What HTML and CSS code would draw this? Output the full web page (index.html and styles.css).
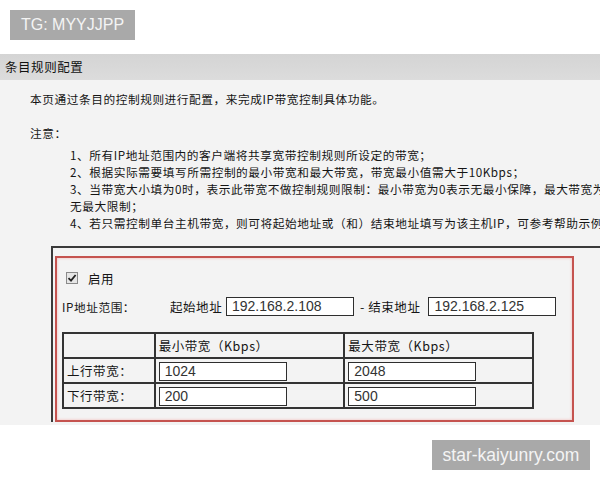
FILE: index.html
```html
<!DOCTYPE html>
<html lang="zh">
<head>
<meta charset="utf-8">
<link rel="stylesheet" href="styles.css">
</head>
<body>
<div class="page">
  <div class="top"><span class="tag">TG: MYYJJPP</span></div>
  <div class="titlebar">条目规则配置</div>
  <div class="content">
    <p class="intro">本页通过条目的控制规则进行配置，来完成IP带宽控制具体功能。</p>
    <p class="note">注意：</p>
    <ul class="items">
      <li>1、所有IP地址范围内的客户端将共享宽带控制规则所设定的带宽；</li>
      <li>2、根据实际需要填写所需控制的最小带宽和最大带宽，带宽最小值需大于10Kbps；</li>
      <li>3、当带宽大小填为0时，表示此带宽不做控制规则限制：最小带宽为0表示无最小保障，最大带宽为0表示</li>
      <li>无最大限制；</li>
      <li>4、若只需控制单台主机带宽，则可将起始地址或（和）结束地址填写为该主机IP，可参考帮助示例。</li>
    </ul>
    <div class="frame">
      <div class="redbox">
        <div class="row enable">
          <svg class="check" width="12" height="12" viewBox="0 0 12 12">
            <rect x="0.5" y="0.5" width="11" height="11" fill="#e6e6e6" stroke="#8a8a8a"/>
            <path d="M2.5 6.2 L5 8.6 L9.6 3" fill="none" stroke="#222" stroke-width="1.8"/>
          </svg>
          <span>启用</span>
        </div>
        <div class="row iprow">
          <span class="lbl">IP地址范围：</span>
          <span class="sub">起始地址</span>
          <span class="field w127">192.168.2.108</span>
          <span class="dash">- 结束地址</span>
          <span class="field w127">192.168.2.125</span>
        </div>
        <table class="bw">
          <tr><td class="c1"></td><td class="c2">最小带宽（Kbps）</td><td class="c3">最大带宽（Kbps）</td></tr>
          <tr><td>上行带宽：</td><td><span class="field cell">1024</span></td><td><span class="field cell">2048</span></td></tr>
          <tr><td>下行带宽：</td><td><span class="field cell">200</span></td><td><span class="field cell">500</span></td></tr>
        </table>
      </div>
    </div>
  </div>
  <div class="site">star-kaiyunry.com</div>
</div>
</body>
</html>
```

FILE: styles.css
```css
html, body {
  margin: 0;
  padding: 0;
  background: #ffffff;
  overflow: hidden;
}
body {
  font-family: "Noto Sans CJK SC", "Liberation Sans", sans-serif;
  font-size: 11.7px;
  letter-spacing: 0.55px;
  color: #151515;
}
.page {
  position: relative;
  width: 600px;
  height: 480px;
  overflow: hidden;
}
.top {
  height: 54px;
  padding: 10px 0 0 10px;
  box-sizing: border-box;
}
.tag {
  display: inline-block;
  width: 125px;
  height: 30px;
  line-height: 30px;
  background: #a9a9a9;
  color: #f4f4f4;
  font-family: "Liberation Sans", sans-serif;
  font-size: 16px;
  letter-spacing: 0;
  text-align: center;
}
.titlebar {
  height: 26px;
  line-height: 26px;
  padding-left: 5px;
  background: linear-gradient(#d4d4d4, #dcdcdc);
  font-size: 12.5px;
  color: #111;
}
.content {
  background: #f3f3f3;
  height: 345px;
  overflow: hidden;
  white-space: nowrap;
}
.intro {
  margin: 0;
  padding: 10px 0 0 30px;
  line-height: 17px;
}
.note {
  margin: 0;
  padding: 17px 0 0 30px;
  line-height: 17px;
}
.items {
  list-style: none;
  margin: 0;
  padding: 5px 0 0 70px;
}
.items li {
  line-height: 17px;
}
.frame {
  margin: 15px 0 0 51px;
  border-top: 2px solid #3a3a3a;
  border-left: 2px solid #3a3a3a;
  padding: 8px 0 0 2px;
}
.redbox {
  width: 510px;
  height: 152px;
  border: 2px solid #c5534f;
  box-shadow: inset 0 0 3px #f2b8b6;
  padding: 10px 0 0 5px;
  box-sizing: content-box;
}
.row {
  display: flex;
  align-items: center;
}
.enable {
  height: 20px;
  padding-left: 4px;
  gap: 10px;
}
.enable span {
  font-size: 12.5px;
}
.iprow {
  margin-top: 8px;
  height: 20px;
}
.lbl {
  width: 108px;
}
.sub {
  width: 56px;
  font-size: 12.5px;
}
.dash {
  margin: 0 8px 0 6px;
  font-size: 12.5px;
}
.field {
  display: inline-block;
  box-sizing: border-box;
  height: 19px;
  line-height: 17px;
  background: #ffffff;
  border: 1px solid #2e2e2e;
  padding-left: 5px;
  font-family: "Liberation Sans", sans-serif;
  font-size: 14px;
  letter-spacing: 0;
  color: #333;
}
.w127 {
  width: 128px;
}
.bw {
  margin-top: 16px;
  border-collapse: collapse;
  width: 472px;
}
.bw td {
  border: 2px solid #333;
  height: 23px;
  padding: 0 0 0 3px;
  font-size: 12.5px;
}
.bw .c1 { width: 88px; }
.bw .c2 { width: 188px; }
.bw .c3 { width: 187px; }
.field.cell {
  width: 128px;
  vertical-align: middle;
}
.site {
  position: absolute;
  left: 432px;
  top: 440px;
  width: 158px;
  height: 30px;
  line-height: 30px;
  background: #a9a9a9;
  color: #f4f4f4;
  font-family: "Liberation Sans", sans-serif;
  font-size: 17.5px;
  letter-spacing: 0;
  text-align: center;
}
```
